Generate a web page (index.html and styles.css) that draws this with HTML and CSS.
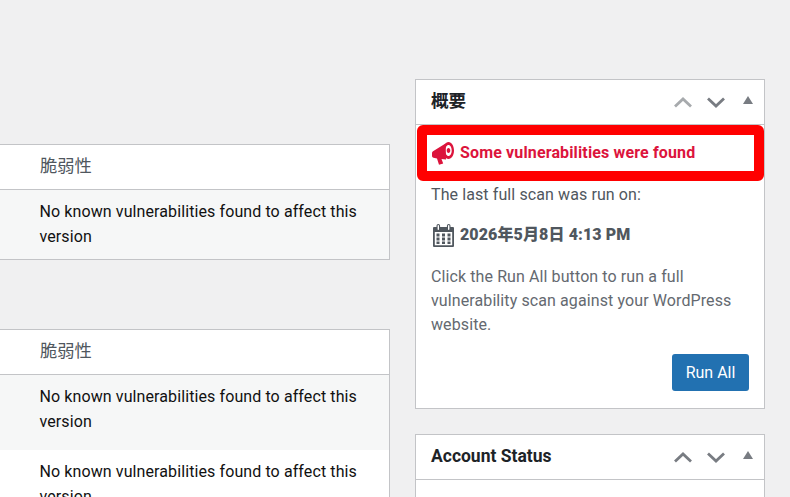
FILE: index.html
```html
<!DOCTYPE html>
<html lang="ja">
<head>
<meta charset="utf-8">
<title>概要</title>
<link rel="stylesheet" href="styles.css">
</head>
<body>
<div class="page">
  <main class="main">
    <section class="vuln-card">
      <h3 class="vuln-head">脆弱性</h3>
      <div class="vuln-row alt">No known vulnerabilities found to affect this version</div>
    </section>
    <section class="vuln-card">
      <h3 class="vuln-head">脆弱性</h3>
      <div class="vuln-row alt tall">No known vulnerabilities found to affect this version</div>
      <div class="vuln-row">No known vulnerabilities found to affect this version</div>
    </section>
  </main>
  <aside class="side">
    <section class="box">
      <header class="box-head">
        <h2 class="box-title">概要</h2>
        <div class="box-controls">
          <svg class="ctl dim" viewBox="0 0 20 20"><path d="M2 14.500 10 7l8 7.500" /></svg>
          <svg class="ctl" viewBox="0 0 20 20"><path d="M2 6.500 10 14l8-7.500" /></svg>
          <svg class="tri" viewBox="0 0 12 10"><path d="M6 1 11 9H1z" /></svg>
        </div>
      </header>
      <div class="box-body">
        <div class="alert">
          <svg class="alert-icon" viewBox="0 0 22 23">
            <path d="M13.500 1.500 1 9.200C.2 9.700 0 10.400 0 11.200v2.600c0 1 .6 1.700 1.500 1.900l3.500.7 2 6.300 4.200-1.300-1.700-4.300 4.500.4Z"/>
            <path fill-rule="evenodd" d="M16.500 0C19.600 0 22 3.700 22 8.500S19.600 17 16.500 17 11 13.300 11 8.500 13.400 0 16.500 0Zm0 3c-1.800 0-3.200 2.400-3.200 5.500S14.700 14 16.500 14s3.200-2.400 3.200-5.500S18.300 3 16.500 3Zm0 3c1 0 1.800 1.100 1.800 2.500S17.500 11 16.500 11s-1.800-1.100-1.800-2.500S15.500 6 16.500 6Z"/>
          </svg>
          <span class="alert-text">Some vulnerabilities were found</span>
        </div>
        <p class="scan-label">The last full scan was run on:</p>
        <p class="scan-date">
          <svg class="cal-icon" viewBox="0 0 21 23">
            <path fill-rule="evenodd" d="M1 3h2.500V1.800a1.800 1.800 0 0 1 3.600 0V3h6.800V1.800a1.800 1.800 0 0 1 3.600 0V3H20a1 1 0 0 1 1 1v18a1 1 0 0 1-1 1H1a1 1 0 0 1-1-1V4a1 1 0 0 1 1-1Zm.800 5v13.200h17.400V8H1.800ZM4.600 1.800v3.400a.7.700 0 0 0 1.400 0V1.800a.7.700 0 0 0-1.400 0Zm10.400 0v3.400a.7.700 0 0 0 1.400 0V1.800a.7.700 0 0 0-1.400 0Z"/>
            <path d="M3.500 9.500h3v3h-3zM9 9.500h3v3H9zM14.500 9.500h3v3h-3zM3.500 13.500h3v3h-3zM9 13.500h3v3H9zM14.500 13.500h3v3h-3zM3.500 17.500h3v2.500h-3zM9 17.500h3v2.500H9zM14.500 17.500h3v2.500h-3z"/>
          </svg>
          <strong>2026年5月8日 4:13 PM</strong>
        </p>
        <p class="scan-help">Click the Run All button to run a full vulnerability scan against your WordPress website.</p>
        <div class="actions"><button class="run-btn" type="button">Run All</button></div>
      </div>
    </section>
    <section class="box">
      <header class="box-head">
        <h2 class="box-title">Account Status</h2>
        <div class="box-controls">
          <svg class="ctl" viewBox="0 0 20 20"><path d="M2 14.500 10 7l8 7.500" /></svg>
          <svg class="ctl" viewBox="0 0 20 20"><path d="M2 6.500 10 14l8-7.500" /></svg>
          <svg class="tri" viewBox="0 0 12 10"><path d="M6 1 11 9H1z" /></svg>
        </div>
      </header>
      <div class="box-body empty"></div>
    </section>
  </aside>
</div>
</body>
</html>
```
FILE: styles.css
```css
html, body {
  margin: 0;
  padding: 0;
  height: 100%;
  overflow: hidden;
  background: #f0f0f1;
}
body {
  font-family: Roboto, "Noto Sans CJK JP", sans-serif;
  font-size: 16px;
  letter-spacing: 0.1px;
  color: #50575e;
}
.page {
  display: flex;
  align-items: flex-start;
  gap: 25px;
  height: 497px;
  overflow: hidden;
}
.main {
  width: 390px;
  flex: none;
  padding-top: 144px;
  display: flex;
  flex-direction: column;
  gap: 69px;
}
.vuln-card {
  background: #fff;
  border: 1px solid #c3c4c7;
  border-left: 0;
}
.vuln-head {
  margin: 0;
  height: 44px;
  line-height: 43px;
  padding-left: 40px;
  font-size: 17.300px;
  font-weight: 400;
  letter-spacing: 0;
  color: #50575e;
  border-bottom: 1px solid #c3c4c7;
}
.vuln-row {
  padding: 9px 20px 10px 39.500px;
  line-height: 25px;
  color: #111;
}
.vuln-row.alt { background: #f6f7f7; }
.vuln-row.tall { padding-bottom: 16px; }
.side {
  width: 350px;
  flex: none;
  padding-top: 79px;
  display: flex;
  flex-direction: column;
  gap: 25px;
}
.box {
  background: #fff;
  border: 1px solid #c3c4c7;
}
.box-head {
  height: 44px;
  display: flex;
  align-items: center;
  justify-content: space-between;
  border-bottom: 1px solid #c3c4c7;
  padding: 0 10px 0 15px;
}
.box-title {
  margin: 0 0 2px;
  font-size: 17.500px;
  line-height: 20px;
  font-weight: 700;
  letter-spacing: 0;
  color: #1d2327;
}
.box-controls {
  display: flex;
  align-items: center;
}
.ctl {
  width: 20px;
  height: 20px;
  margin-right: 12.500px;
  fill: none;
  stroke: #787c82;
  stroke-width: 2.800;
}
.ctl.dim { stroke: #a7aaad; }
.tri {
  width: 12px;
  height: 10px;
  margin-left: 4px;
  margin-bottom: 4px;
  fill: #787c82;
}
.box-body {
  padding: 0 15px;
  height: 283px;
}
.box-body.empty { height: 40px; }
.alert {
  display: flex;
  align-items: center;
  gap: 6px;
  margin: 0 0 0 -14px;
  width: 347px;
  height: 56px;
  box-sizing: border-box;
  border: 10px solid #f00;
  border-radius: 6px;
  padding-left: 5px;
  background: #fff;
  color: #dc143c;
  font-weight: 700;
}
.alert-text {
  padding-bottom: 2px;
  letter-spacing: 0.14px;
}
.alert-icon {
  width: 22px;
  height: 23px;
  fill: #dc143c;
  flex: none;
}
.scan-label {
  margin: 0;
  line-height: 24px;
  height: 24px;
  padding-top: 2px;
}
.scan-date {
  margin: 16px 0 0;
  display: flex;
  align-items: center;
  gap: 6px;
  padding-left: 2px;
  line-height: 24px;
  font-weight: 700;
}
.cal-icon {
  width: 21px;
  height: 23px;
  fill: #50575e;
  flex: none;
}
.scan-help {
  margin: 18px 0 0;
  line-height: 24px;
  color: #646970;
}
.actions {
  display: flex;
  justify-content: flex-end;
  margin-top: 17px;
}
.run-btn {
  width: 77px;
  height: 37px;
  padding: 0;
  border: 0;
  border-radius: 3px;
  background: #2271b1;
  color: #fff;
  font: 400 16px Roboto, sans-serif;
}
```
